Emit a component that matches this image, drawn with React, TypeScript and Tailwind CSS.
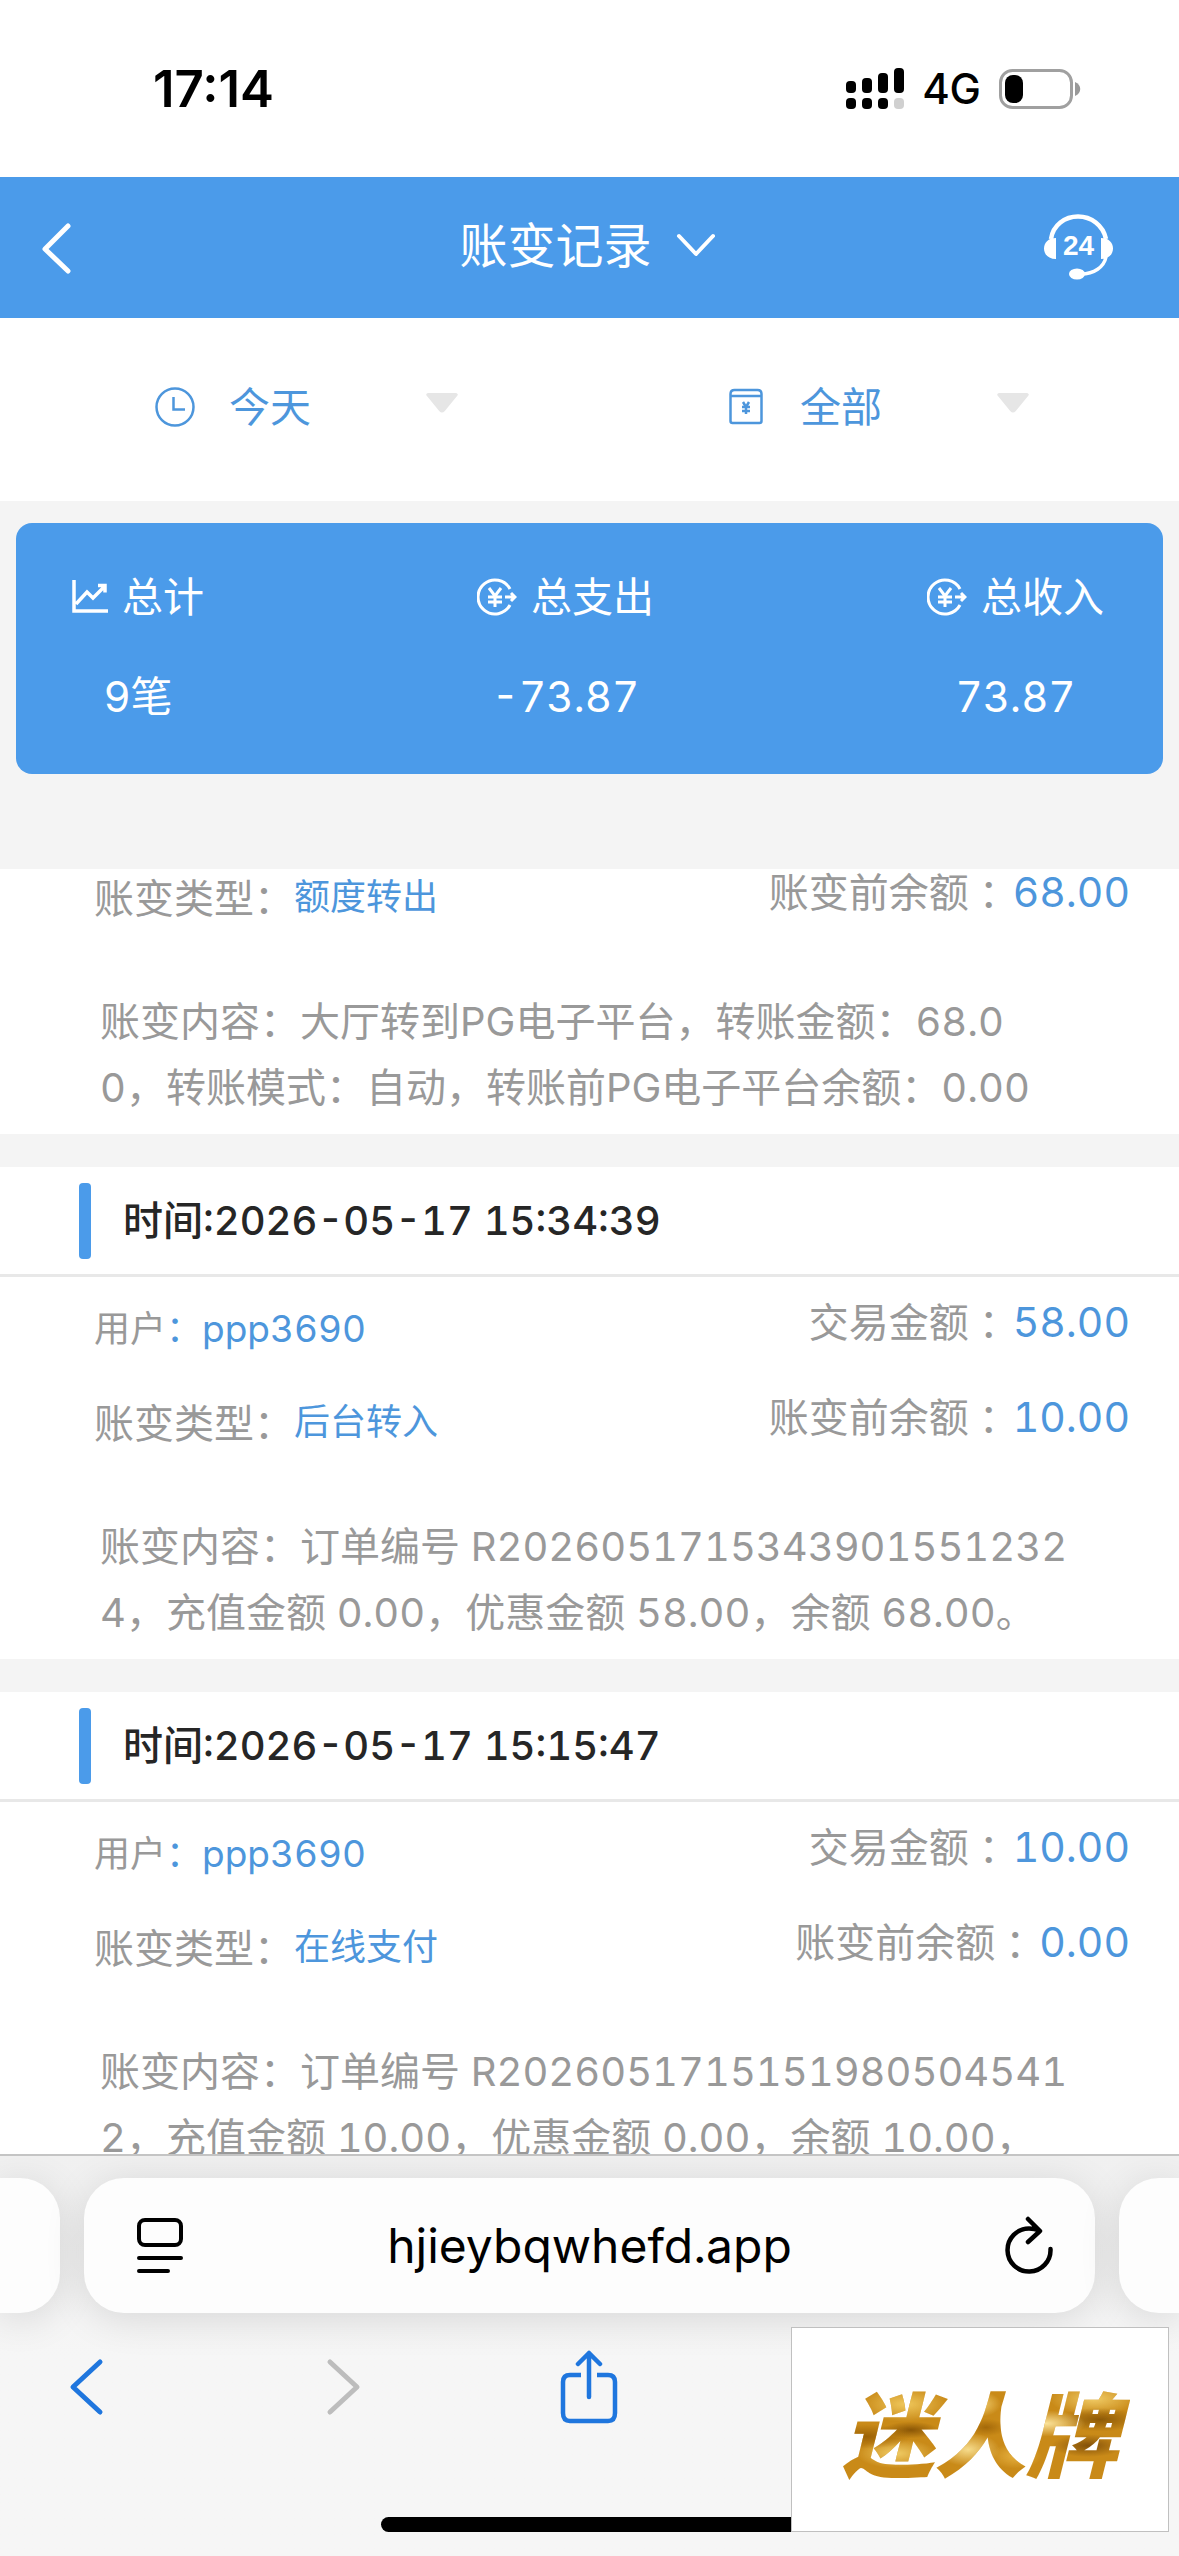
import React from "react";

type Row = {
  time: string;
  user: string;
  amount: string;
  type: string;
  before: string;
  content: string[];
  partial?: boolean;
};

const records: Row[] = [
  {
    time: "",
    user: "",
    amount: "",
    type: "额度转出",
    before: "68.00",
    content: ["大厅转到PG电子平台，转账金额：68.0", "0，转账模式：自动，转账前PG电子平台余额：0.00"],
    partial: true,
  },
  {
    time: "2026-05-17 15:34:39",
    user: "ppp3690",
    amount: "58.00",
    type: "后台转入",
    before: "10.00",
    content: ["订单编号 R2026051715343901551232", "4，充值金额 0.00，优惠金额 58.00，余额 68.00。"],
  },
  {
    time: "2026-05-17 15:15:47",
    user: "ppp3690",
    amount: "10.00",
    type: "在线支付",
    before: "0.00",
    content: ["订单编号 R2026051715151980504541", "2，充值金额 10.00，优惠金额 0.00，余额 10.00，"],
  },
];

function StatusBar() {
  return (
    <div className="flex h-[177px] shrink-0 items-center justify-between bg-white pl-[153px] pr-[98px] text-black">
      <span className="text-[51px] font-semibold normal-nums leading-none">17:14</span>
      <div className="flex items-center gap-[18px]">
        <svg width="58" height="42" viewBox="0 0 58 42" aria-hidden="true">
          <rect x="0" y="13" width="10" height="12" rx="4" />
          <rect x="16" y="10" width="10" height="15" rx="4" />
          <rect x="32" y="5" width="10" height="20" rx="4" />
          <rect x="48" y="0" width="10" height="25" rx="4" />
          <rect x="0" y="30" width="10" height="11" rx="4" />
          <rect x="16" y="30" width="10" height="11" rx="4" />
          <rect x="32" y="30" width="10" height="11" rx="4" />
          <rect x="48" y="30" width="10" height="11" rx="4" fill="#d0d0d0" />
        </svg>
        <span className="text-[42px] font-medium leading-none">4G</span>
        <svg width="82" height="40" viewBox="0 0 82 40" aria-hidden="true">
          <rect x="1.5" y="1.5" width="71" height="37" rx="12" fill="none" stroke="#a0a0a0" strokeWidth="3" />
          <rect x="6" y="6" width="18" height="28" rx="8" />
          <path d="M76 13c7 3 7 11 0 14z" fill="#999" />
        </svg>
      </div>
    </div>
  );
}

function HeadsetIcon() {
  return (
    <svg width="70" height="68" viewBox="0 0 70 68" fill="none" aria-hidden="true">
      <path d="M7 25C9 11 21 2.500 34 2.500S59 11 62 25" stroke="#fff" strokeWidth="4.500" />
      <path d="M62 43C60 53 50 60 37 60" stroke="#fff" strokeWidth="3.500" />
      <path d="M12 24v21C4 45 0 40 0 34.500S4 24 12 24zM57 24v21C65 45 69 40 69 34.500S65 24 57 24z" fill="#fff" />
      <ellipse cx="33" cy="60" rx="8" ry="5.500" fill="#fff" />
      <text x="34.500" y="41" textAnchor="middle" fill="#fff" fontSize="28" fontWeight="600" fontFamily="Liberation Sans, sans-serif">24</text>
    </svg>
  );
}

function TitleBar() {
  return (
    <header className="grid h-[141px] shrink-0 grid-cols-[1fr_auto_1fr] items-center bg-[#4b9bea] pl-[41px] pr-[65px] text-white">
      <button type="button" aria-label="返回" className="justify-self-start">
        <svg width="32" height="52" viewBox="0 0 32 52" fill="none" stroke="#fff" strokeWidth="5" strokeLinecap="round" strokeLinejoin="round">
          <path d="M27 4 4 27l23 22" />
        </svg>
      </button>
      <button type="button" className="ml-5 flex items-center gap-6 pb-1 text-[48px] leading-none">
        账变记录
        <svg width="40" height="26" viewBox="0 0 40 26" fill="none" stroke="#fff" strokeWidth="4" strokeLinecap="round" strokeLinejoin="round" aria-hidden="true">
          <path d="m3 3 17 18L37 3" />
        </svg>
      </button>
      <button type="button" aria-label="客服" className="justify-self-end">
        <HeadsetIcon />
      </button>
    </header>
  );
}

function Filter({ label, value, icon }: { label: string; value: string; icon: React.ReactNode }) {
  return (
    <label className="flex items-center pl-[155px] text-[#4d96dc]">
      <span className="flex w-[74px]">{icon}</span>
      <select aria-label={label} defaultValue={value} className="w-[197px] appearance-none bg-transparent text-[41px] leading-[60px] outline-none">
        <option>{value}</option>
      </select>
      <svg width="32" height="20" viewBox="0 0 34 20" preserveAspectRatio="none" className="mb-2" aria-hidden="true">
        <path d="M2 0h30q3 1 1 3L20 18q-3 3-6 0L1 3Q-1 1 2 0z" fill="#e6e6e6" />
      </svg>
    </label>
  );
}

function Filters() {
  return (
    <div className="grid h-[183px] shrink-0 grid-cols-2 items-center bg-white pb-[6px] pr-[37px]">
      <Filter
        label="日期"
        value="今天"
        icon={
          <svg width="40" height="40" viewBox="0 0 40 40" fill="none" stroke="currentColor" strokeWidth="2.500" aria-hidden="true">
            <circle cx="20" cy="20" r="18.500" />
            <path d="M18.500 10v12.500H30" />
          </svg>
        }
      />
      <Filter
        label="类型"
        value="全部"
        icon={
          <svg width="40" height="40" viewBox="0 0 40 40" fill="none" stroke="currentColor" strokeWidth="2.500" aria-hidden="true">
            <path d="M4.500 7q0-4 4-4h23q4 0 4 4v27q0 2-2 2h-27q-2 0-2-2zM4.500 9h31" />
            <path d="m17 15 3 5 3-5M20 20v7M16 20h8M16 24h8" />
          </svg>
        }
      />
    </div>
  );
}

function YuanIcon() {
  return (
    <svg width="40" height="38" viewBox="0 0 40 38" fill="none" stroke="#fff" strokeWidth="3" aria-hidden="true">
      <path d="M33 11A17 17 0 1 0 33 27" />
      <path d="m12 10 6 8 6-8M18 18v11M11 19h14M11 24h14M28 19h10M34 15l4 4-4 4" />
    </svg>
  );
}

function ChartIcon() {
  return (
    <svg width="36" height="34" viewBox="0 0 36 34" fill="none" stroke="#fff" strokeWidth="3.500" aria-hidden="true">
      <path d="M2 0v31h34M4 24l11-12 6 6L32 7M26 5.500h7v7" />
    </svg>
  );
}

function SummaryItem({ icon, label, value }: { icon: React.ReactNode; label: string; value: string }) {
  return (
    <div className="flex flex-col items-center gap-10 leading-[60px]">
      <div className="flex items-center gap-[14px] text-[41px]">
        {icon}
        <span>{label}</span>
      </div>
      <div className="text-[42px]">{value}</div>
    </div>
  );
}

function Amount({ label, value }: { label: string; value: string }) {
  return (
    <div className="flex items-center pb-1">
      {label}
      <span className="font-['Noto_Sans_CJK_TC',sans-serif]" lang="zh-TW">：</span>
      <span className="pl-1 text-[41px] text-[#4d96dc]">{value}</span>
    </div>
  );
}

function Record({ r }: { r: Row }) {
  return (
    <article className="bg-white text-[40px] text-[#999]">
      {!r.partial && (
        <>
          <h2 className="flex h-[110px] items-center gap-8 border-b-[3px] border-[#e8e8e8] pl-[79px] font-medium text-[#262626]">
            <span className="h-[76px] w-3 rounded-sm bg-[#4b9bea]" />
            时间:{r.time}
          </h2>
          <div className="flex h-[95px] items-center justify-between pl-[94px] pr-[49px] leading-none">
            <div className="flex items-center pt-2">
              <span className="text-[36px]">用户<span className="text-[#4d96dc]">：</span></span>
              <span className="text-[37px] text-[#4d96dc]">{r.user}</span>
            </div>
            <Amount label="交易金额" value={r.amount} />
          </div>
        </>
      )}
      <div className={r.partial ? "flex h-[73px] items-center justify-between pb-[22px] pl-[94px] pr-[49px] leading-none" : "flex h-[95px] items-center justify-between pl-[94px] pr-[49px] leading-none"}>
        <div className="flex items-center">
          <span className="pt-2">账变类型：</span>
          <span className="pt-1 text-[36px] text-[#4d96dc]">{r.type}</span>
        </div>
        <Amount label="账变前余额" value={r.before} />
      </div>
      <p className="whitespace-nowrap pb-[13px] pl-[100px] pt-[47px] leading-[66px]">
        账变内容：{r.content[0]}
        <br />
        {r.content[1]}
      </p>
    </article>
  );
}

function BrowserBar() {
  return (
    <footer className="relative h-[402px] shrink-0 border-t-2 border-[#c4c4c4] bg-linear-to-b from-[#f0f0f0] to-[#f6f6f6] to-50%">
      <div className="flex gap-6 overflow-hidden pb-12 pt-[22px]">
        <div className="h-[135px] w-[60px] shrink-0 rounded-r-[40px] bg-[#fdfdfd] shadow-[0_6px_40px_rgba(0,0,0,0.12)]" />
        <div className="flex h-[135px] flex-1 items-center justify-between rounded-[40px] bg-[#fdfdfd] pl-[52px] pr-[42px] text-black shadow-[0_6px_40px_rgba(0,0,0,0.12)]">
          <button type="button" aria-label="页面菜单">
            <svg width="48" height="58" viewBox="0 0 48 58" fill="none" stroke="#000" strokeWidth="4" strokeLinecap="round">
              <rect x="3" y="3" width="42" height="25" rx="6" />
              <path d="M3 41h42M3 54h29" />
            </svg>
          </button>
          <span className="pr-[10px] text-[48px] leading-none">hjieybqwhefd.app</span>
          <button type="button" aria-label="刷新">
            <svg width="48" height="60" viewBox="0 0 48 60" fill="none" stroke="#000" strokeWidth="4.500" strokeLinecap="round" strokeLinejoin="round">
              <path d="M45.500 33A21.500 21.500 0 1 1 24 12.500q6 0 10 2M23 3l12 12-12 11" />
            </svg>
          </button>
        </div>
        <div className="h-[135px] w-[60px] shrink-0 rounded-l-[40px] bg-[#fdfdfd] shadow-[0_6px_40px_rgba(0,0,0,0.12)]" />
      </div>
      <nav className="-mt-3 grid h-[76px] grid-cols-[326fr_233fr_620fr] items-center">
        <button type="button" aria-label="后退" className="ml-[69px] justify-self-start">
          <svg width="36" height="58" viewBox="0 0 36 58" fill="none" stroke="#1f76de" strokeWidth="5" strokeLinecap="round" strokeLinejoin="round">
            <path d="M31 4 4 29l27 25" />
          </svg>
        </button>
        <button type="button" aria-label="前进" className="justify-self-start">
          <svg width="36" height="58" viewBox="0 0 36 58" fill="none" stroke="#bdbdbd" strokeWidth="5" strokeLinecap="round" strokeLinejoin="round">
            <path d="m4 4 27 25L4 54" />
          </svg>
        </button>
        <button type="button" aria-label="分享" className="justify-self-start">
          <svg width="60" height="74" viewBox="0 0 60 74" fill="none" stroke="#1f76de" strokeWidth="4.500" strokeLinecap="round" strokeLinejoin="round">
            <path strokeLinecap="butt" d="M22 25h-11q-7 0-7 7v31q0 8 7 8h38q7 0 7-8V32q0-7-7-7H38" />
            <path d="M30 47V3M19 14 30 3l11 11" />
          </svg>
        </button>
      </nav>
      <div className="absolute bottom-6 left-1/2 h-[15px] w-[418px] -translate-x-1/2 rounded-full bg-black" />
      <div className="absolute bottom-6 right-[10px] flex h-[205px] w-[378px] items-center justify-center border border-[#c0c0c0] bg-white">
        <span className="bg-[#c98a18] bg-[radial-gradient(ellipse_at_12%_55%,#9c6206_0,transparent_12%),radial-gradient(ellipse_at_25%_30%,#efc75c_0,transparent_14%),radial-gradient(ellipse_at_27%_50%,#8a5606_0,transparent_9%),radial-gradient(ellipse_at_22%_68%,#f0cc66_0,transparent_12%),radial-gradient(ellipse_at_50%_30%,#f2cf70_0,transparent_10%),radial-gradient(ellipse_at_52%_48%,#a4690a_0,transparent_9%),radial-gradient(ellipse_at_46%_65%,#f6dc8c_0,transparent_14%),radial-gradient(ellipse_at_62%_70%,#e6b140_0,transparent_10%),radial-gradient(ellipse_at_72%_45%,#fae29a_0,transparent_13%),radial-gradient(ellipse_at_90%_42%,#8d5a08_0,transparent_11%),radial-gradient(ellipse_at_88%_26%,#f0cb66_0,transparent_12%),radial-gradient(ellipse_at_86%_62%,#83510a_0,transparent_10%)] bg-clip-text px-3 font-['Noto_Sans_CJK_SC',sans-serif] text-[92px] font-black italic leading-[130px] text-transparent">
          迷人牌
        </span>
      </div>
    </footer>
  );
}

export default function App() {
  return (
    <div className="flex h-screen flex-col overflow-hidden bg-[#f4f4f4] font-[Inter,'Noto_Sans_CJK_SC',sans-serif] tabular-nums" lang="zh-CN">
      <StatusBar />
      <TitleBar />
      <Filters />
      <section className="mx-4 mb-[95px] mt-[22px] flex shrink-0 justify-between rounded-2xl bg-[#4b9bea] pb-[47px] pl-[56px] pr-[59px] pt-[44px] text-white">
        <SummaryItem icon={<ChartIcon />} label="总计" value="9笔" />
        <SummaryItem icon={<YuanIcon />} label="总支出" value="-73.87" />
        <SummaryItem icon={<YuanIcon />} label="总收入" value="73.87" />
      </section>
      <main className="min-h-0 flex-1 overflow-hidden">
        <div className="flex flex-col gap-[33px]">
          {records.map((r, i) => (
            <Record key={i} r={r} />
          ))}
        </div>
      </main>
      <BrowserBar />
    </div>
  );
}
